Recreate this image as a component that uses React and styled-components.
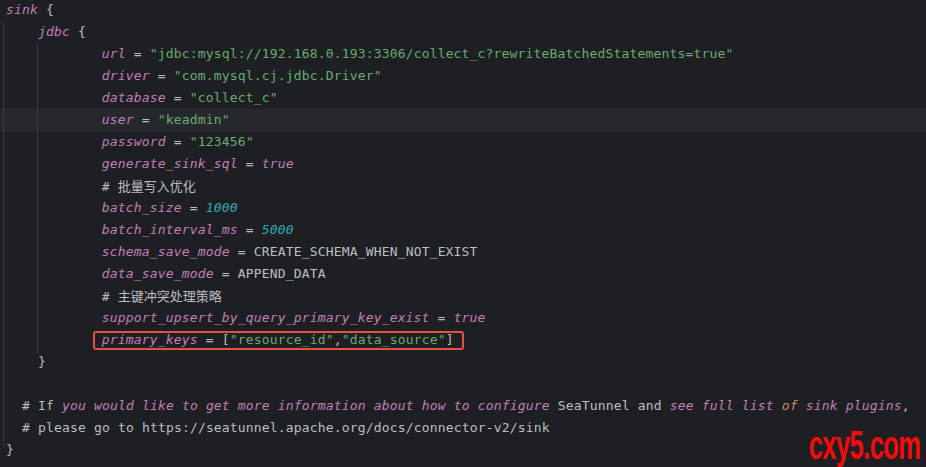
import React from 'react'
import styled, { createGlobalStyle } from 'styled-components'

const GlobalStyle = createGlobalStyle`
  html, body {
    margin: 0;
    padding: 0;
    background: #1e1f22;
  }
`

const Editor = styled.div`
  position: relative;
  width: 926px;
  height: 467px;
  overflow: hidden;
  background: #1e1f22;
  font-family: 'DejaVu Sans Mono', 'Liberation Mono', 'Noto Sans CJK SC', monospace;
  font-size: 13px;
  letter-spacing: 0.17px;
  color: #bcbec4;
`

const Code = styled.div`
  position: relative;
  margin-top: -1px;
  display: flex;
  flex-direction: column;
`

const Guide = styled.div`
  position: absolute;
  left: ${(p) => p.left}px;
  top: ${(p) => p.top}px;
  height: ${(p) => p.height}px;
  width: 1px;
  background: #393b40;
`

const Row = styled.div`
  height: 22px;
  line-height: 22px;
  white-space: pre;
  padding-left: ${(p) => 6 + p.indent * 7.98}px;
  background: ${(p) => (p.current ? '#26282e' : 'transparent')};
`

const Key = styled.span`
  color: #c27fb9;
  font-style: italic;
`
const Str = styled.span`
  color: #6aab73;
`
const Num = styled.span`
  color: #2aacb8;
  font-style: italic;
`
const Kw = styled.span`
  color: #cf8e6d;
  font-style: italic;
`
const Cjk = styled.span`
  font-family: 'Noto Sans CJK SC', sans-serif;
  font-size: 13px;
  letter-spacing: 0;
`

const Marked = styled.span`
  position: relative;
  &::before {
    content: '';
    position: absolute;
    left: -9px;
    right: -10px;
    top: -1px;
    bottom: -3px;
    border: 2px solid #e0533f;
    border-radius: 3px;
  }
`

const Watermark = styled.div`
  position: absolute;
  right: 6px;
  bottom: 2px;
  color: #f20c0c;
  font-family: 'Liberation Sans', sans-serif;
  font-weight: bold;
  font-size: 40px;
  line-height: 1;
  letter-spacing: -1px;
  transform: scaleX(0.64);
  transform-origin: right center;
`

const Pair = ({ k, children }) => (
  <>
    <Key>{k}</Key> = {children}
  </>
)

export default function App() {
  return (
    <Editor>
      <GlobalStyle />
      <Code>
        <Guide left={3} top={23} height={425} />
        <Guide left={37} top={45} height={310} />
        <Row indent={0}><Key>sink</Key> {'{'}</Row>
        <Row indent={4}><Key>jdbc</Key> {'{'}</Row>
        <Row indent={12}><Pair k="url"><Str>"jdbc:mysql://192.168.0.193:3306/collect_c?rewriteBatchedStatements=true"</Str></Pair></Row>
        <Row indent={12}><Pair k="driver"><Str>"com.mysql.cj.jdbc.Driver"</Str></Pair></Row>
        <Row indent={12}><Pair k="database"><Str>"collect_c"</Str></Pair></Row>
        <Row indent={12} current><Pair k="user"><Str>"keadmin"</Str></Pair></Row>
        <Row indent={12}><Pair k="password"><Str>"123456"</Str></Pair></Row>
        <Row indent={12}><Pair k="generate_sink_sql"><Key>true</Key></Pair></Row>
        <Row indent={12}># <Cjk>批量写入优化</Cjk></Row>
        <Row indent={12}><Pair k="batch_size"><Num>1000</Num></Pair></Row>
        <Row indent={12}><Pair k="batch_interval_ms"><Num>5000</Num></Pair></Row>
        <Row indent={12}><Pair k="schema_save_mode">CREATE_SCHEMA_WHEN_NOT_EXIST</Pair></Row>
        <Row indent={12}><Pair k="data_save_mode">APPEND_DATA</Pair></Row>
        <Row indent={12}># <Cjk>主键冲突处理策略</Cjk></Row>
        <Row indent={12}><Pair k="support_upsert_by_query_primary_key_exist"><Key>true</Key></Pair></Row>
        <Row indent={12}>
          <Marked>
            <Pair k="primary_keys">[<Str>"resource_id"</Str>,<Str>"data_source"</Str>]</Pair>
          </Marked>
        </Row>
        <Row indent={4}>{'}'}</Row>
        <Row indent={0} />
        <Row indent={2}>
          # If <Key>you would like to get more information about how to configure</Key> SeaTunnel and{' '}
          <Key>see full list</Key> <Kw>of</Kw> <Key>sink plugins</Key>,
        </Row>
        <Row indent={2}># please go to https://seatunnel.apache.org/docs/connector-v2/sink</Row>
        <Row indent={0}>{'}'}</Row>
      </Code>
      <Watermark>cxy5.com</Watermark>
    </Editor>
  )
}
